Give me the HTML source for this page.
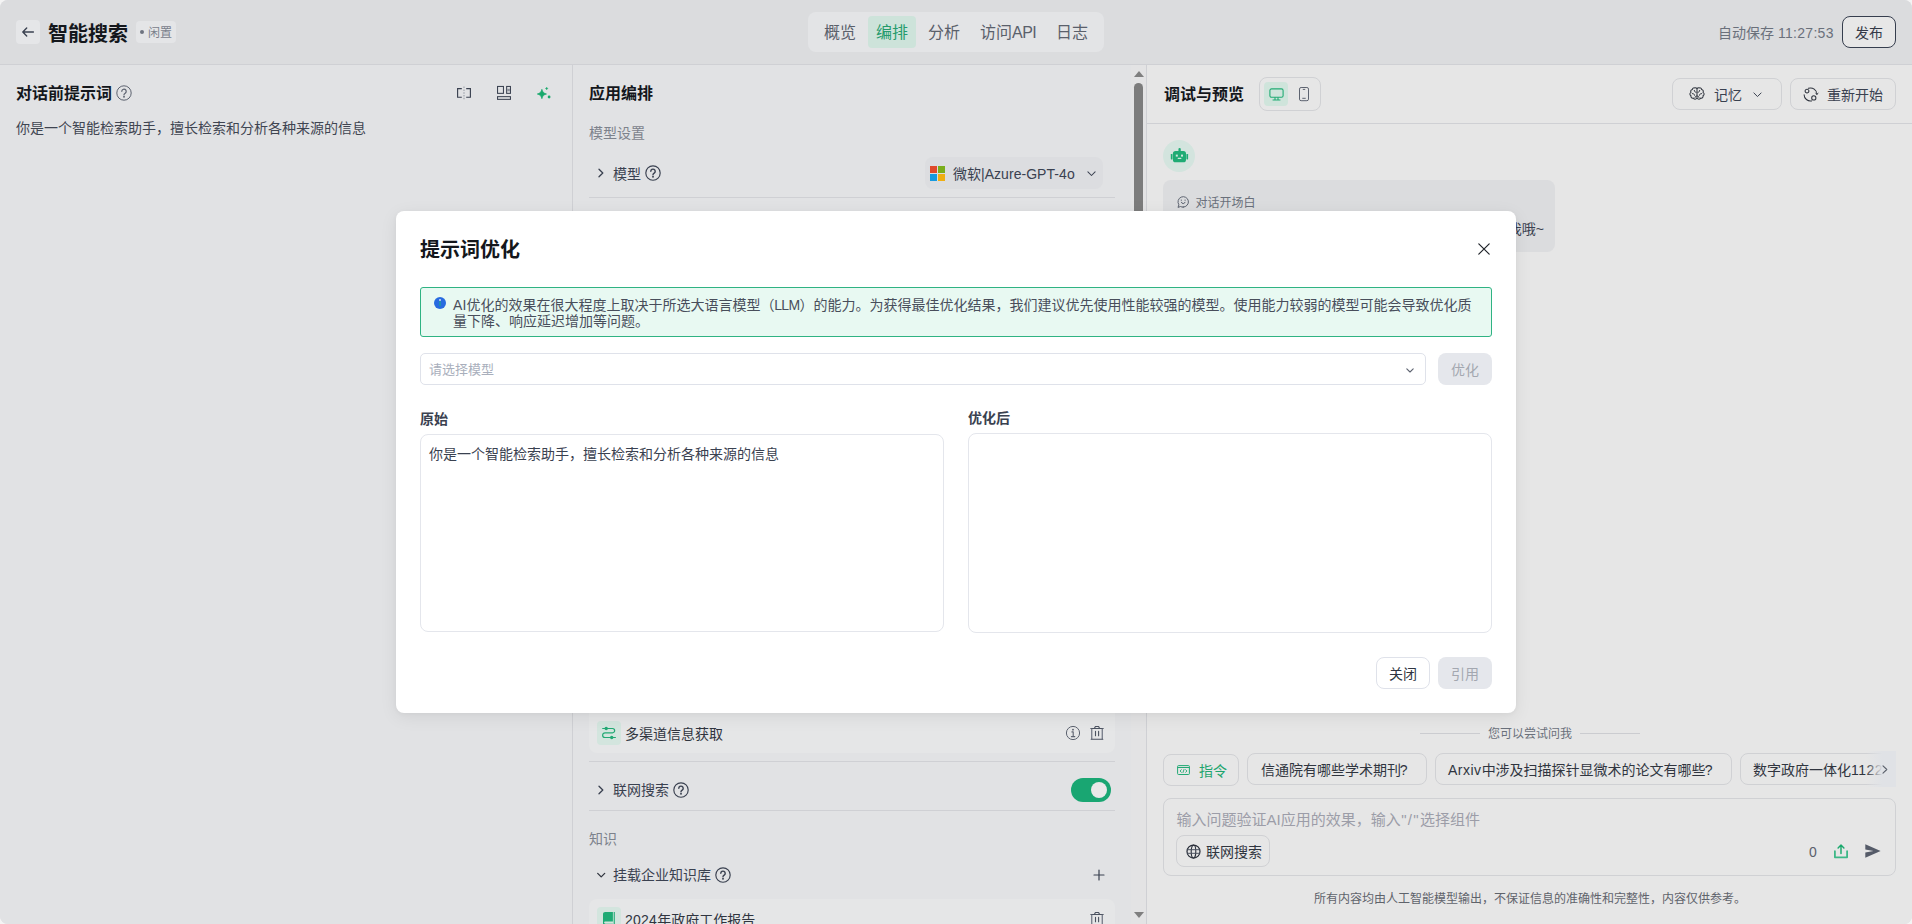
<!DOCTYPE html>
<html lang="zh-CN">
<head>
<meta charset="utf-8">
<title>智能搜索 - 提示词优化</title>
<style>
*{box-sizing:border-box;margin:0;padding:0}
html,body{width:1912px;height:924px;overflow:hidden;background:#f4f4f4}
body{font-family:"Liberation Sans","Noto Sans CJK SC",sans-serif;color:#1f2329;position:relative}
.abs{position:absolute}
.t{position:absolute;white-space:nowrap;line-height:1}
svg{position:absolute;overflow:visible}
#page{position:absolute;left:0;top:0;width:1912px;height:924px;border-radius:8px;overflow:hidden;background:#e1e2e4}
#hdr{position:absolute;left:0;top:0;width:1912px;height:65px;background:#dbdcde;border-bottom:1px solid #cfd0d4}
#left{position:absolute;left:0;top:65px;width:572px;height:859px;background:#e1e2e4}
#mid{position:absolute;left:572px;top:65px;width:559px;height:859px;background:#e1e2e4;border-left:1px solid #cfd0d4}
#sbar{position:absolute;left:1131px;top:65px;width:15px;height:859px;background:#e3e3e4}
#right{position:absolute;left:1146px;top:65px;width:766px;height:859px;background:#e6e6e6;border-left:1px solid #cfd0d4}
.b14{font-size:14px}
.b16{font-size:16px}
.b12{font-size:12px}
.bold{font-weight:700}
.g{color:#7d828c}
.d{color:#30353f}
.line{position:absolute;height:1px;background:#cfd0d4}
.help{position:absolute;width:16px;height:16px}
.btn{position:absolute;border:1px solid #d0d1d4;border-radius:6px}
#modal{position:absolute;left:396px;top:211px;width:1120px;height:502px;background:#fff;border-radius:8px;box-shadow:0 4px 18px rgba(0,0,0,.07),0 1px 5px rgba(0,0,0,.04)}
</style>
</head>
<body>
<div id="page">

<!-- ================= HEADER ================= -->
<div id="hdr">
  <div class="abs" style="left:16px;top:20px;width:24px;height:24px;border-radius:4px;background:#e5e6e8"></div>
  <svg style="left:21px;top:25px" width="14" height="14" viewBox="0 0 14 14" fill="none" stroke="#3a4150" stroke-width="1.4" stroke-linecap="round" stroke-linejoin="round"><path d="M12.400 7H2M5.700 3.100L1.800 7L5.700 10.900"/></svg>
  <div class="t bold" style="left:48px;top:24px;font-size:20px;color:#14171c">智能搜索</div>
  <div class="abs" style="left:136px;top:21px;width:40px;height:22px;border-radius:4px;background:#e4e5e7"></div>
  <div class="abs" style="left:140px;top:30px;width:4px;height:4px;border-radius:50%;background:#6e7480"></div>
  <div class="t b12" style="left:148px;top:27px;color:#7a808b">闲置</div>

  <div class="abs" style="left:808px;top:12px;width:296px;height:40px;border-radius:8px;background:#e3e4e6"></div>
  <div class="abs" style="left:868px;top:16px;width:48px;height:32px;border-radius:4px;background:#cde3da"></div>
  <div class="t b16" style="left:824px;top:25px;color:#5a606b">概览</div>
  <div class="t b16" style="left:876px;top:25px;color:#259b6c">编排</div>
  <div class="t b16" style="left:928px;top:25px;color:#5a606b">分析</div>
  <div class="t b16" style="left:980px;top:25px;color:#5a606b">访问<span style="letter-spacing:-.5px">API</span></div>
  <div class="t b16" style="left:1056px;top:25px;color:#5a606b">日志</div>

  <div class="t b14" style="left:1718px;top:26px;color:#6a707b">自动保存 <span style="letter-spacing:.3px">11:27:53</span></div>
  <div class="abs" style="left:1842px;top:16px;width:54px;height:32px;border:1px solid #363e4e;border-radius:8px;background:#e7e7e7"></div>
  <div class="t b14" style="left:1855px;top:26px;color:#333947">发布</div>
</div>

<!-- ================= LEFT PANEL ================= -->
<div id="left">
  <div class="t b16 bold" style="left:16px;top:21px;color:#14171c">对话前提示词</div>
  <svg class="help" style="left:116px;top:20px" viewBox="0 0 16 16" fill="none" stroke="#5d6370" stroke-width="1"><circle cx="8" cy="8" r="7.200"/><path d="M5.800 6.300a2.200 2.200 0 1 1 3.400 1.850c-.8.5-1.200.9-1.200 1.700" stroke-width="1.200" stroke-linecap="round"/><circle cx="8" cy="11.800" r=".95" fill="#5d6370" stroke="none"/></svg>
  <div class="t b14" style="left:16px;top:56px;color:#3f4551">你是一个智能检索助手，擅长检索和分析各种来源的信息</div>

  <!-- three icons -->
  <svg style="left:456px;top:21px" width="16" height="14" viewBox="0 0 16 14" fill="none" stroke="#3a4150" stroke-width="1.150"><path d="M5.800 2.650H1.600v8.550h4.200M10.200 2.650h4.200v8.550h-4.200"/><path d="M8 .600v12.600" stroke="#9a9ea7" stroke-width="1.100" stroke-dasharray="1.500 1.300"/></svg>
  <svg style="left:497px;top:20px" width="14" height="15" viewBox="0 0 14 15" fill="none" stroke="#3a4150" stroke-width="1.050"><rect x=".55" y="1.450" width="5.900" height="6.900"/><rect x="9.650" y="1.450" width="3.800" height="6.900"/><rect x="10.200" y="3.800" width="2.700" height="2.500" fill="#8d929c" stroke="none"/><rect x=".55" y="11.650" width="12.900" height="2.700"/></svg>
  <svg style="left:537px;top:22px" width="14" height="12" viewBox="0 0 14 12" fill="#1aa96d"><path d="M4.900 2.300C5.600 5.100 6.600 6.200 9.500 7C6.600 7.800 5.600 8.900 4.900 11.700C4.200 8.900 3.200 7.800.3 7C3.200 6.200 4.200 5.100 4.900 2.300z" stroke="#1aa96d" stroke-width=".7" stroke-linejoin="round"/><path d="M9.700 0c.25 1 .5 1.250 1.500 1.500c-1 .25-1.250.5-1.500 1.500c-.25-1-.5-1.250-1.500-1.500c1-.25 1.250-.5 1.500-1.500z" stroke="#1aa96d" stroke-width=".3"/><circle cx="12.100" cy="10" r="1.400"/></svg>
</div>

<!-- ================= MIDDLE PANEL ================= -->
<div id="mid">
  <!-- coordinates inside #mid: x = pageX-573, y = pageY-65 -->
  <div class="t b16 bold" style="left:16px;top:21px;color:#14171c">应用编排</div>
  <div class="t b14" style="left:16px;top:61px;color:#7d828c">模型设置</div>

  <svg style="left:24px;top:103px" width="8" height="10" viewBox="0 0 8 10" fill="none" stroke="#3a4150" stroke-width="1.3" stroke-linecap="round" stroke-linejoin="round"><path d="M2 1.2L5.8 5L2 8.800"/></svg>
  <div class="t b14" style="left:40px;top:102px;color:#3a4150">模型</div>
  <svg class="help" style="left:72px;top:100px" viewBox="0 0 16 16" fill="none" stroke="#3a4150" stroke-width="1.150"><circle cx="8" cy="8" r="7.200"/><path d="M5.800 6.300a2.200 2.200 0 1 1 3.400 1.850c-.8.5-1.200.9-1.200 1.700" stroke-width="1.400" stroke-linecap="round"/><circle cx="8" cy="11.800" r=".95" fill="#3a4150" stroke="none"/></svg>

  <div class="abs" style="left:352px;top:92px;width:178px;height:32px;border-radius:8px;background:#dcdde0"></div>
  <div class="abs" style="left:356.500px;top:101px;width:7.400px;height:7.400px;background:#e04a2c"></div>
  <div class="abs" style="left:364.600px;top:101px;width:7.400px;height:7.400px;background:#7aae1c"></div>
  <div class="abs" style="left:356.500px;top:109.100px;width:7.400px;height:7.400px;background:#169ae0"></div>
  <div class="abs" style="left:364.600px;top:109.100px;width:7.400px;height:7.400px;background:#efae12"></div>
  <div class="t b14" style="left:380px;top:102px;color:#3a4150">微软|<span style="letter-spacing:.05px">Azure-GPT-4o</span></div>
  <svg style="left:513.500px;top:105.500px" width="9" height="5.400" viewBox="0 0 10 6" fill="none" stroke="#3a4150" stroke-width="1.150" stroke-linecap="round" stroke-linejoin="round"><path d="M1 1L5 5L9 1"/></svg>
  <div class="line" style="left:16px;top:132px;width:526px"></div>

  <!-- tool card (partly hidden behind the dialog) -->
  <div class="abs" style="left:16px;top:600px;width:526px;height:88px;border-radius:8px;background:#e5e6e7"></div>
  <div class="abs" style="left:24px;top:656px;width:24px;height:24px;border-radius:4px;background:#d3e5de"></div>
  <svg style="left:29px;top:661px" width="14" height="14" viewBox="0 0 14 14" fill="none" stroke="#22a974" stroke-width="1.200" stroke-linecap="round"><path d="M.700 2.500H10.500a2.150 2.150 0 0 1 0 4.300H3a2.350 2.350 0 0 0 0 4.700H13.400"/><circle cx="4.200" cy="2.500" r="1.700" fill="#22a974" stroke="none"/><circle cx="9.700" cy="11.500" r="1.700" fill="#22a974" stroke="none"/></svg>
  <div class="t b14" style="left:52px;top:662px;color:#30353f">多渠道信息获取</div>
  <svg style="left:492px;top:660px" width="16" height="16" viewBox="0 0 16 16" fill="none" stroke="#5d6370" stroke-width="1"><circle cx="8" cy="8" r="6.600"/><path d="M8.200 6.900v4.600M6.900 6.900h1.300M6.400 11.600h3.400" stroke-width="1.100" stroke-linecap="round"/><circle cx="8" cy="4.700" r=".85" fill="#4b5260" stroke="none"/></svg>
  <svg style="left:517px;top:660px" width="14" height="16" viewBox="0 0 14 16" fill="none" stroke="#4b5260" stroke-width="1.1" stroke-linejoin="round"><path d="M.4 3.500h13.200M4.500 3.300l.9-1.800h3.200l.9 1.800" stroke="#4b5260"/><path d="M1.700 3.800v10.400M12.300 3.800v10.400" stroke="#7d828e" stroke-width="1.400"/><path d="M1.200 14.300h11.600M5.500 6.400v4.400M8.600 6.400v4.400" stroke="#4b5260" stroke-linecap="round"/></svg>
  <div class="line" style="left:16px;top:696px;width:526px"></div>

  <svg style="left:24px;top:720px" width="8" height="10" viewBox="0 0 8 10" fill="none" stroke="#3a4150" stroke-width="1.3" stroke-linecap="round" stroke-linejoin="round"><path d="M2 1.2L5.8 5L2 8.800"/></svg>
  <div class="t b14" style="left:40px;top:718px;color:#3a4150">联网搜索</div>
  <svg class="help" style="left:100px;top:717px" viewBox="0 0 16 16" fill="none" stroke="#3a4150" stroke-width="1.150"><circle cx="8" cy="8" r="7.200"/><path d="M5.800 6.300a2.200 2.200 0 1 1 3.400 1.850c-.8.5-1.200.9-1.200 1.700" stroke-width="1.400" stroke-linecap="round"/><circle cx="8" cy="11.800" r=".95" fill="#3a4150" stroke="none"/></svg>
  <div class="abs" style="left:498px;top:713px;width:40px;height:24px;border-radius:12px;background:#19a672"></div>
  <div class="abs" style="left:518px;top:717px;width:16px;height:16px;border-radius:50%;background:#e9e9e9"></div>
  <div class="line" style="left:16px;top:745px;width:526px"></div>

  <div class="t b14" style="left:16px;top:767px;color:#7d828c">知识</div>
  <svg style="left:23px;top:807px" width="10" height="7" viewBox="0 0 10 7" fill="none" stroke="#30353f" stroke-width="1.300" stroke-linecap="round" stroke-linejoin="round"><path d="M1.700 1.400L5.200 4.900L8.700 1.400"/></svg>
  <div class="t b14" style="left:40px;top:803px;color:#3a4150">挂载企业知识库</div>
  <svg class="help" style="left:142px;top:802px" viewBox="0 0 16 16" fill="none" stroke="#3a4150" stroke-width="1.150"><circle cx="8" cy="8" r="7.200"/><path d="M5.800 6.300a2.200 2.200 0 1 1 3.400 1.850c-.8.5-1.200.9-1.200 1.700" stroke-width="1.400" stroke-linecap="round"/><circle cx="8" cy="11.800" r=".95" fill="#3a4150" stroke="none"/></svg>
  <svg style="left:520px;top:804px" width="12" height="12" viewBox="0 0 12 12" fill="none" stroke="#3a4150" stroke-width="1.2" stroke-linecap="round"><path d="M6 1v10M1 6h10"/></svg>

  <div class="abs" style="left:16px;top:834px;width:526px;height:40px;border-radius:8px;background:#e5e6e7"></div>
  <div class="abs" style="left:24px;top:842px;width:24px;height:24px;border-radius:4px;background:#d3e5de"></div>
  <svg style="left:30px;top:847px" width="12" height="14" viewBox="0 0 12 14" fill="#1eab74"><path d="M2.200 0H9.900V9.400H2.400C1.600 9.400 1.100 9.900 1.100 10.600S1.600 11.800 2.400 11.800H9.900V14H2.200C.9 14 0 13 0 11.800V2.200C0 .9.900 0 2.200 0z"/><rect x="10.700" y="0" width="1.100" height="14"/></svg>
  <div class="t b14" style="left:52px;top:848px;color:#30353f"><span style="letter-spacing:.25px">2024</span>年政府工作报告</div>
  <svg style="left:517px;top:846px" width="14" height="16" viewBox="0 0 14 16" fill="none" stroke="#4b5260" stroke-width="1.1" stroke-linejoin="round"><path d="M.4 3.500h13.200M4.500 3.300l.9-1.800h3.200l.9 1.800" stroke="#4b5260"/><path d="M1.700 3.800v10.400M12.300 3.800v10.400" stroke="#7d828e" stroke-width="1.400"/><path d="M1.200 14.300h11.600M5.500 6.400v4.400M8.600 6.400v4.400" stroke="#4b5260" stroke-linecap="round"/></svg>
</div>

<div id="sbar">
  <div class="abs" style="left:2.500px;top:6px;width:0;height:0;border-left:5px solid transparent;border-right:5px solid transparent;border-bottom:6.500px solid #7f7f7f"></div>
  <div class="abs" style="left:3px;top:18px;width:9px;height:400px;border-radius:5px;background:#7c7c7c"></div>
  <div class="abs" style="left:2.500px;top:846.500px;width:0;height:0;border-left:5px solid transparent;border-right:5px solid transparent;border-top:6.500px solid #7f7f7f"></div>
</div>

<!-- ================= RIGHT PANEL ================= -->
<div id="right">
  <!-- coordinates inside #right: x = pageX-1147, y = pageY-65 -->
  <div class="t b16 bold" style="left:17px;top:22px;color:#14171c">调试与预览</div>
  <div class="btn" style="left:112px;top:12px;width:62px;height:34px;border-radius:8px"></div>
  <div class="abs" style="left:117px;top:17px;width:24px;height:24px;border-radius:4px;background:#cfe4db"></div>
  <svg style="left:121.500px;top:22.500px" width="15" height="13" viewBox="0 0 15 13" fill="none" stroke="#22ab74" stroke-width="1.100" stroke-linejoin="round"><rect x=".9" y=".9" width="13.200" height="8.400" rx="1.600"/><path d="M6 9.300v2.600M9 9.300v2.600M3.600 12h7.800"/></svg>
  <svg style="left:152px;top:22px" width="10" height="14" viewBox="0 0 10 14" fill="none" stroke="#5d6370" stroke-width="1"><rect x=".5" y=".5" width="9" height="13.200" rx="1.600"/><path d="M4.200 2.400h1.600M3.700 11.300h2.600" stroke-linecap="round"/></svg>

  <div class="btn" style="left:525px;top:13px;width:110px;height:32px;border-radius:8px"></div>
  <svg style="left:542px;top:22px" width="16" height="13" viewBox="0 0 16 13" fill="none" stroke="#30353f" stroke-width="1.050" stroke-linecap="round" stroke-linejoin="round"><path d="M8 2.300V11M8 2.400C8 1.200 6.900.5 5.800.9C4.600.5 3.400 1.300 3.400 2.500C2 2.800 1.200 4.200 2 5.400C.5 6.200.5 8 2 8.800C1.500 10.200 2.800 11.500 4.200 11.100C4.900 12.500 7 12.700 8 11M8 2.400C8 1.200 9.100.5 10.200.9C11.400.5 12.600 1.300 12.600 2.500C14 2.800 14.800 4.200 14 5.400C15.500 6.200 15.500 8 14 8.800C14.500 10.200 13.200 11.500 11.800 11.100C11.100 12.500 9 12.700 8 11"/><path d="M5.300 3.400C5.300 4.500 6 5.300 7.100 5.300M10.700 3.400C10.700 4.500 10 5.300 8.900 5.300M3.300 6.600C4.500 6.400 5.500 7.100 5.600 8.300M12.700 6.600C11.500 6.400 10.500 7.100 10.400 8.300M6 10.500C6 9.600 6.700 9 8 9C9.300 9 10 9.600 10 10.500" stroke-width=".95"/></svg>
  <div class="t b14" style="left:567px;top:23px;color:#3a4150">记忆</div>
  <svg style="left:605.500px;top:26.500px" width="9" height="5.500" viewBox="0 0 10 6" fill="none" stroke="#3a4150" stroke-width="1.1" stroke-linecap="round" stroke-linejoin="round"><path d="M1 1L5 5L9 1"/></svg>

  <div class="btn" style="left:643px;top:13px;width:106px;height:32px;border-radius:8px"></div>
  <svg style="left:655.800px;top:21.500px" width="15" height="15" viewBox="0 0 15 15" fill="none" stroke="#30353f" stroke-width="1.050" stroke-linecap="round" stroke-linejoin="round"><path d="M5.400 1.300A6.400 6.400 0 0 1 13.900 7.300"/><path d="M12.700 6l1.200 1.500L15 6.100" stroke-width=".9"/><circle cx="4" cy="4.100" r="1.900"/><path d="M1.100 7.700A6.400 6.400 0 0 0 8.600 13.900"/><circle cx="10.800" cy="10.900" r="2.100"/></svg>
  <div class="t b14" style="left:680px;top:23px;color:#3a4150">重新开始</div>

  <div class="line" style="left:0;top:58px;width:765px"></div>

  <div class="abs" style="left:16px;top:75px;width:32px;height:32px;border-radius:50%;background:#d3e4de"></div>
  <svg style="left:23px;top:82px" width="19" height="16" viewBox="0 0 19 16" fill="#1eab74"><rect x="8.450" y="1" width="2.300" height="4" rx="1.100"/><rect x="2.900" y="4" width="13.100" height="11.300" rx="2.600"/><rect x=".8" y="7" width="1.700" height="5.400" rx=".6"/><rect x="16.400" y="7" width="1.700" height="5.400" rx=".6"/><rect x="5.800" y="7.600" width="2" height="2" fill="#cfe6dd"/><rect x="11" y="7.600" width="2" height="2" fill="#cfe6dd"/><rect x="7.700" y="10.800" width="3.700" height="1.300" rx=".5" fill="#cfe6dd"/></svg>

  <div class="abs" style="left:16px;top:115px;width:392px;height:72px;border-radius:8px;background:#dbdcde"></div>
  <svg style="left:30px;top:131px" width="12" height="12" viewBox="0 0 12 12" fill="none" stroke="#5d6370" stroke-width="1" stroke-linecap="round" stroke-linejoin="round"><path d="M6.200 11.100a5.200 5.200 0 1 0-4.300-2.300L1 11.400l2.500-.900a5.200 5.200 0 0 0 2.700.600z"/><path d="M4.400 6.300a1.900 1.900 0 0 0 3.600 0"/><path d="M4.300 4v.4M8.100 4v.4"/></svg>
  <div class="t b12" style="left:48.500px;top:132px;color:#6a707b">对话开场白</div>
  <div class="t b14" style="right:368px;top:157px;color:#3a4150">我是智能搜索助手，有问题可以问我哦~</div>

  <!-- suggestions -->
  <div class="line" style="left:273px;top:668px;width:60px;background:#cbccd0"></div>
  <div class="t b12" style="left:341px;top:663px;color:#6a707b">您可以尝试问我</div>
  <div class="line" style="left:433px;top:668px;width:60px;background:#cbccd0"></div>

  <div class="btn" style="left:16px;top:689px;width:76px;height:32px;border-radius:8px"></div>
  <svg style="left:29.500px;top:700px" width="13" height="10" viewBox="0 0 13 10" fill="none" stroke="#22a974" stroke-width="1" stroke-linejoin="round"><rect x=".6" y=".6" width="11.800" height="8.900" rx=".9"/><path d="M.6 2.500h11.800"/><path d="M4.300 4.700L3.100 6l1.200 1.300M8.700 4.700L9.900 6L8.700 7.300M7 4.500L6 7.500" stroke-width=".9" stroke-linecap="round"/></svg>
  <div class="t b14" style="left:52px;top:699px;color:#1fa56f">指令</div>

  <div class="btn" style="left:100px;top:688px;width:180px;height:32px;border-radius:8px"></div>
  <div class="t b14" style="left:114px;top:698px;color:#30353f">信通院有哪些学术期刊<span style="margin-left:-1.200px">?</span></div>
  <div class="btn" style="left:288px;top:688px;width:297px;height:32px;border-radius:8px"></div>
  <div class="t b14" style="left:301px;top:698px;color:#30353f"><span style="letter-spacing:.5px">Arxiv</span>中涉及扫描探针显微术的论文有哪些<span style="margin-left:-.8px">?</span></div>
  <div class="abs" style="left:593px;top:686px;width:156px;height:36px;overflow:hidden">
    <div class="btn" style="left:0;top:2px;width:260px;height:32px;border-radius:8px"></div>
    <div class="t b14" style="left:13px;top:12px;color:#30353f">数字政府一体化<span style="letter-spacing:.5px">11222025</span></div>
    <div class="abs" style="left:108px;top:0;width:48px;height:36px;background:linear-gradient(90deg,rgba(224,226,230,0) 38%,rgba(224,226,230,.6) 58%,#e0e2e6 72%)"></div>
  </div>
  <svg style="left:735px;top:700px" width="6" height="9" viewBox="0 0 6 9" fill="none" stroke="#5a606b" stroke-width="1.100" stroke-linecap="round" stroke-linejoin="round"><path d="M1 .800l3.800 3.700L1 8.200"/></svg>

  <!-- input -->
  <div class="abs" style="left:16px;top:733px;width:733px;height:78px;border:1px solid #d0d1d4;border-radius:8px"></div>
  <div class="t" style="left:29.500px;top:747px;font-size:15px;color:#9c9da8">输入问题验证AI应用的效果，输入<span style="letter-spacing:1.300px;margin-left:.5px">"/"</span>选择组件</div>
  <div class="btn" style="left:29px;top:770px;width:94px;height:32px;border-radius:8px"></div>
  <svg style="left:38.500px;top:778.500px" width="15" height="15" viewBox="0 0 15 15" fill="none" stroke="#2a2f3a" stroke-width="1.250"><circle cx="7.500" cy="7.500" r="6.500"/><ellipse cx="7.500" cy="7.500" rx="2.300" ry="6.500" stroke-width="1.100"/><path d="M1.200 5.700h12.600M1.200 9.300h12.600" stroke-width="1" stroke="#4b5260"/></svg>
  <div class="t b14" style="left:59px;top:780px;color:#30353f">联网搜索</div>
  <div class="t b14" style="left:662px;top:780px;color:#5a606b">0</div>
  <svg style="left:687px;top:779px" width="14" height="15" viewBox="0 0 14 15" fill="none" stroke-linecap="round" stroke-linejoin="round"><path d="M.9 7.200V13.300H13.100V7.200" stroke="#3db887" stroke-width="1.800"/><path d="M7 9.400V1.300M4.100 4L7 1.100l2.900 2.900" stroke="#1aa96d" stroke-width="1.450"/></svg>
  <svg style="left:717.500px;top:779px" width="16" height="14" viewBox="0 0 16 14" fill="#555b68"><path d="M.3.200L15.600 6.900L.3 13.700V8.400L8.500 6.900L.3 5.500z"/></svg>

  <div class="t b12" style="left:167px;top:828px;color:#5f636b">所有内容均由人工智能模型输出，不保证信息的准确性和完整性，内容仅供参考。</div>
</div>

</div>

<!-- ================= MODAL ================= -->
<div id="modal">
  <!-- coordinates inside #modal: x = pageX-396, y = pageY-211 -->
  <div class="t bold" style="left:24px;top:29px;font-size:20px;color:#14171c">提示词优化</div>
  <svg style="left:1082px;top:32px" width="12" height="12" viewBox="0 0 12 12" fill="none" stroke="#1f2329" stroke-width="1.200" stroke-linecap="round"><path d="M.8.800l10.400 10.400M11.200.800L.8 11.200"/></svg>

  <div class="abs" style="left:24px;top:76px;width:1072px;height:50px;border:1px solid #2fb383;border-radius:3px;background:#e8f9f2"></div>
  <div class="abs" style="left:38px;top:85.700px;width:12px;height:12px;border-radius:50%;background:#276be0"></div>
  <div class="abs" style="left:43.300px;top:88.300px;width:1.700px;height:1.700px;background:#a8bcf0"></div>
  <div class="abs" style="left:43.300px;top:90.300px;width:1.700px;height:5px;background:#1f8fb0"></div>
  <div class="abs b14" style="left:57px;top:86px;width:1030px;line-height:16px;color:#484e5b"><span style="letter-spacing:.1px">AI</span>优化的效果在很大程度上取决于所选大语言模型（<span style="letter-spacing:-.65px;margin-left:-.3px">LLM</span>）的能力。为获得最佳优化结果，我们建议优先使用性能较强的模型。使用能力较弱的模型可能会导致优化质<br>量下降、响应延迟增加等问题。</div>

  <div class="abs" style="left:24px;top:142px;width:1006px;height:32px;border:1px solid #dfe2ea;border-radius:5px"></div>
  <div class="t" style="left:33px;top:152px;font-size:13px;color:#a9afbc">请选择模型</div>
  <svg style="left:1010px;top:156.600px" width="8" height="5" viewBox="0 0 8 5" fill="none" stroke="#5d6370" stroke-width="1.100" stroke-linecap="round" stroke-linejoin="round"><path d="M.8.800L4 4l3.200-3.200"/></svg>
  <div class="abs" style="left:1042px;top:142px;width:54px;height:32px;border-radius:8px;background:#e5e7ec"></div>
  <div class="t b14" style="left:1055px;top:152px;color:#a3a7b0">优化</div>

  <div class="t b14 bold" style="left:24px;top:201px;color:#3a4150">原始</div>
  <div class="t b14 bold" style="left:572px;top:200px;color:#3a4150">优化后</div>
  <div class="abs" style="left:24px;top:223px;width:524px;height:198px;border:1px solid #e4e6ec;border-radius:8px"></div>
  <div class="t b14" style="left:33px;top:236px;color:#3a4150">你是一个智能检索助手，擅长检索和分析各种来源的信息</div>
  <div class="abs" style="left:572px;top:222px;width:524px;height:200px;border:1px solid #e4e6ec;border-radius:8px"></div>

  <div class="abs" style="left:980px;top:446px;width:54px;height:32px;border:1px solid #dfe2ea;border-radius:8px"></div>
  <div class="t b14" style="left:993px;top:456px;color:#2f3541">关闭</div>
  <div class="abs" style="left:1042px;top:446px;width:54px;height:32px;border-radius:8px;background:#e5e7ec"></div>
  <div class="t b14" style="left:1055px;top:456px;color:#a3a7b0">引用</div>
</div>

</body>
</html>
